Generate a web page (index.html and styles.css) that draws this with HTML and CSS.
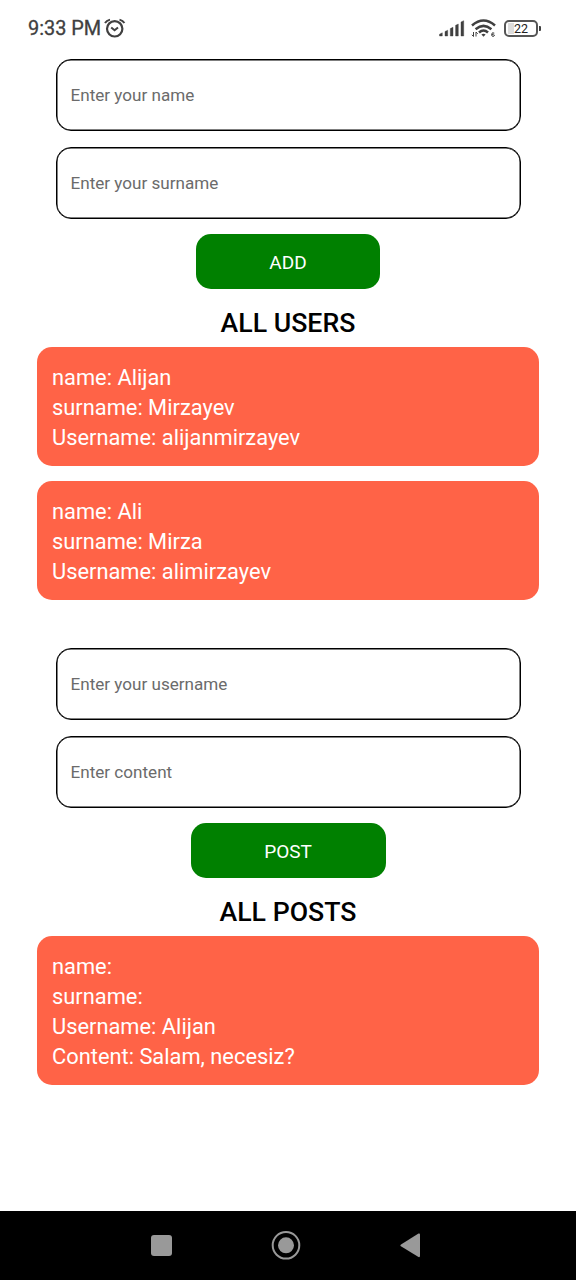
FILE: index.html
```html
<!DOCTYPE html>
<html lang="en">
<head>
<meta charset="utf-8">
<title>Users and posts</title>
<link rel="stylesheet" href="styles.css">
</head>
<body>
<header class="status">
  <span class="time">9:33 PM</span>
  <svg class="alarm" width="22" height="20" viewBox="0 0 22 20" fill="none" stroke="#404040" stroke-width="2.200"><circle cx="10.700" cy="10.800" r="7.700"/><path d="M1 5Q2.500 2.500 6 1.600M20.400 5Q19 2.500 15.500 1.600" stroke-width="2"/><path d="M7.200 9.500 10.600 12.300 14 9.500" stroke-width="2"/></svg>
  <svg class="signal" width="26" height="17" viewBox="0 0 26 17" fill="#404040"><path d="M.5 16V14.200L3.300 12.800V16ZM6 16V11.500L8.700 10.200V16ZM11.300 16V8.600L14 7.200V16ZM16.600 16V5.300L19.300 4V16ZM22 16V2L24.700 .7V16Z" stroke="#404040" stroke-width=".4" stroke-linejoin="round"/></svg>
  <svg class="wifi" width="26" height="19" viewBox="0 0 26 19" fill="none" stroke="#404040" stroke-width="2.500"><path d="M1 6.500Q12.500-3.500 24 6.500M4.600 10.200Q12.500 3.500 20.400 10.200M8 13.500Q12.500 9.500 17 13.500"/><path d="M10.400 15.500Q12.500 13.900 14.600 15.500L12.500 17.800Z" fill="#404040" stroke="none"/><path d="M2.500 13V17.500L.8 15.800M5 17.500V13L6.800 14.800M23.300 14.100Q20.800 12.800 20.600 15.500Q20.600 17.400 22 17.400Q23.400 17.400 23.400 16Q23 14.800 20.800 15.500" stroke-width="1"/></svg>
  <span class="battery">22</span>
</header>
<main class="content">
  <form class="form">
    <input class="field" placeholder="Enter your name">
    <input class="field" placeholder="Enter your surname">
    <button class="button" type="button">ADD</button>
  </form>
  <h2 class="title">ALL USERS</h2>
  <section class="list">
    <div class="card">name: Alijan<br>surname: Mirzayev<br>Username: alijanmirzayev</div>
    <div class="card">name: Ali<br>surname: Mirza<br>Username: alimirzayev</div>
  </section>
  <form class="form posts">
    <input class="field" placeholder="Enter your username">
    <input class="field" placeholder="Enter content">
    <button class="button wide" type="button">POST</button>
  </form>
  <h2 class="title">ALL POSTS</h2>
  <section class="list">
    <div class="card">name:<br>surname:<br>Username: Alijan<br>Content: Salam, necesiz?</div>
  </section>
</main>
<nav class="nav">
  <svg width="576" height="69" viewBox="0 0 576 69"><rect x="151" y="24" width="21" height="21" rx="3" fill="#999"/><circle cx="286" cy="34.300" r="13.300" fill="none" stroke="#999" stroke-width="2"/><circle cx="286" cy="34.300" r="8" fill="#999"/><path d="M400.500 35Q400 34.300 401 33.500L418.500 22.500Q420 22 420 23.500V45Q420 46.500 418.500 46Z" fill="#999"/></svg>
</nav>
</body>
</html>
```
FILE: styles.css
```css
* { box-sizing: border-box; }
body { margin: 0; height: 1280px; display: flex; flex-direction: column; background: #fff; font-family: Roboto, sans-serif; overflow: hidden; }
.status { height: 58px; padding: 0 38px 2px 28px; display: flex; align-items: center; color: #404040; }
.time { font-size: 19.900px; font-weight: 400; -webkit-text-stroke: .3px #404040; }
.alarm { margin-left: 3px; }
.signal { margin-left: auto; }
.wifi { margin-left: 6px; }
.battery { position: relative; width: 34px; height: 17px; margin-left: 7px; border: 2px solid #555; border-radius: 5px; background: linear-gradient(#ddd, #ddd) 2px 1px / 6px 11px no-repeat; font-size: 12.500px; line-height: 13px; text-align: center; color: #222; }
.battery::after { content: ""; position: absolute; right: -5px; top: 4px; width: 2px; height: 5px; border-radius: 0 1px 1px 0; background: #404040; }
.content { flex: 1; }
.form { display: flex; flex-direction: column; align-items: center; gap: 15.500px; padding-top: .8px; }
.field { width: 465px; height: 72.400px; padding: 1px 14px 0; border: 1px solid #000; box-shadow: inset 0 0 0 .5px #000; border-radius: 15px; font: 17.100px Roboto, sans-serif; background: #fff; }
.field::placeholder { color: #6b6b6b; opacity: 1; }
.button { width: 184px; height: 55px; margin-top: -.6px; padding-top: 3px; border: 0; border-radius: 15px; background: #008000; color: #fff; font: 19px Roboto, sans-serif; }
.wide { width: 195px; }
.title { margin: 16px 0 6px; text-align: center; font-size: 26.700px; line-height: 36px; font-weight: 500; color: #000; }
.list { display: flex; flex-direction: column; gap: 15px; padding: 0 37px; }
.card { padding: 16px 15px 13px; border-radius: 15px; background: #ff6347; color: #fff; font-size: 21.850px; line-height: 30px; }
.posts { margin-top: 47px; }
.nav { height: 69px; background: #000; }
.nav svg { display: block; }
```
